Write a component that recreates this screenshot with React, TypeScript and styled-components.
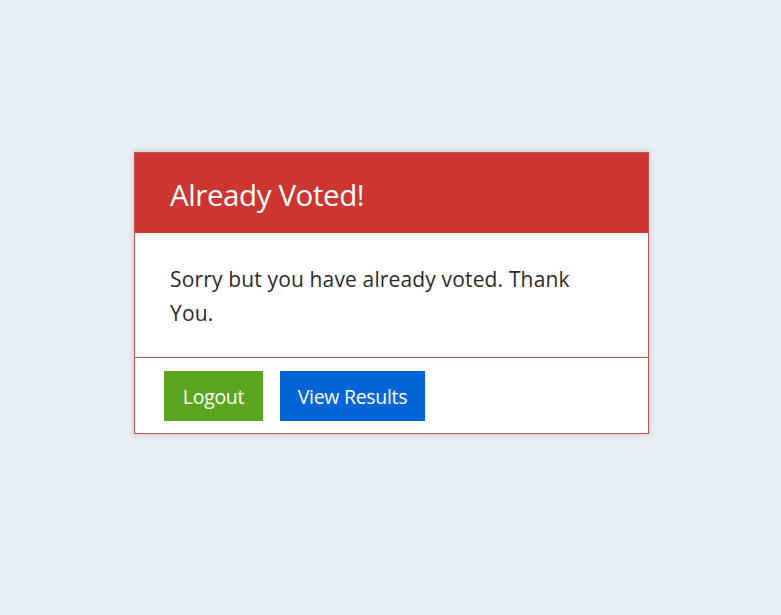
import React from "react";
import styled, { createGlobalStyle } from "styled-components";

const Global = createGlobalStyle`
  html, body { margin: 0; padding: 0; background: #eaedf2; }
  body { font-family: "Open Sans", "Noto Sans", sans-serif; }
`;

const Page = styled.div`
  width: 781px;
  height: 615px;
  background: #eaedf2;
  display: flex;
  flex-direction: column;
  align-items: flex-start;
  padding: 152px 0 0 134px;
  box-sizing: border-box;
`;

const Card = styled.div`
  width: 515px;
  background: #ffffff;
  border: 1px solid #c4504c;
  box-shadow: 0 0 6px rgba(80, 90, 110, 0.25);
  box-sizing: border-box;
  display: flex;
  flex-direction: column;
`;

const Header = styled.div`
  background: #cc3530;
  height: 80px;
  display: flex;
  align-items: center;
  padding-left: 35px;
`;

const Title = styled.h1`
  margin: 0 0 -2px;
  font-family: "Open Sans", sans-serif;
  font-weight: 400;
  font-size: 29.5px;
  color: #ffffff;
  letter-spacing: -0.4px;
`;

const Body = styled.div`
  height: 125px;
  box-sizing: border-box;
  padding: 29px 35px 0 35px;
  border-bottom: 1px solid #c4504c;
`;

const Message = styled.p`
  margin: 0;
  max-width: 420px;
  font-size: 21px;
  line-height: 34px;
  color: #2b2b2b;
  letter-spacing: 0.15px;
`;

const Footer = styled.div`
  display: flex;
  gap: 17px;
  padding: 13px 29px 12px;
`;

const Button = styled.button<{ $bg: string }>`
  height: 50px;
  border: none;
  background: ${(p) => p.$bg};
  color: #ffffff;
  font-family: "Open Sans", sans-serif;
  font-size: 19.5px;
  padding: 0;
  letter-spacing: -0.3px;
  cursor: pointer;
`;

export default function App() {
  return (
    <>
      <Global />
      <Page>
        <Card>
          <Header>
            <Title>Already Voted!</Title>
          </Header>
          <Body>
            <Message>Sorry but you have already voted. Thank You.</Message>
          </Body>
          <Footer>
            <Button $bg="#5aa61f" style={{ width: 99 }}>Logout</Button>
            <Button $bg="#0465d8" style={{ width: 145 }}>View Results</Button>
          </Footer>
        </Card>
      </Page>
    </>
  );
}
